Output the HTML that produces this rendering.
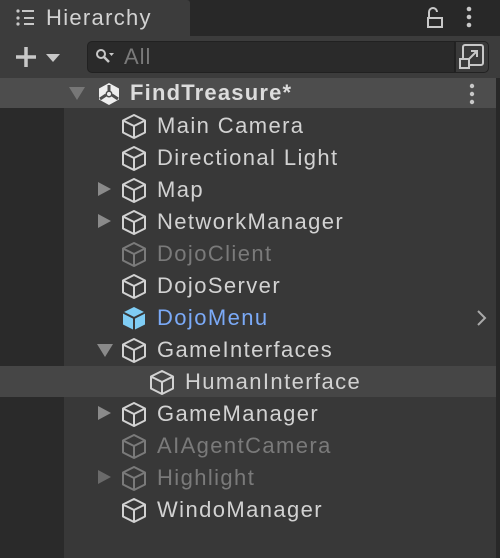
<!DOCTYPE html><html><head><style>
body{margin:0;width:500px;height:558px;background:#383838;position:relative;overflow:hidden;font-family:"Liberation Sans",sans-serif;color:#d2d2d2}
.a{position:absolute}
.row{position:absolute;left:0;width:496px;height:32px}
.t{position:absolute;top:4px;font-size:22px;line-height:26px;letter-spacing:1.4px;white-space:nowrap}
.ic{position:absolute;top:4px}
.arr{position:absolute;top:9px;width:0;height:0;border-top:7px solid transparent;border-bottom:7px solid transparent;border-left:13px solid #8a8a8a}
.dn{position:absolute;top:11px;width:0;height:0;border-left:8px solid transparent;border-right:8px solid transparent;border-top:13px solid #8a8a8a}
</style></head><body>
<div class="a" style="left:0;top:0;width:500px;height:36px;background:#282828"></div>
<div class="a" style="left:0;top:0;width:190px;height:36px;background:#3c3c3c;border-radius:0 3px 0 0"></div>
<svg class="a" style="left:15px;top:8px" width="22" height="20"><g fill="#c8c8c8"><circle cx="3" cy="3" r="1.6"/><circle cx="3" cy="10" r="1.6"/><circle cx="3" cy="16" r="1.6"/><rect x="7" y="2" width="12" height="2"/><rect x="9" y="9" width="10" height="2"/><rect x="9" y="15" width="10" height="2"/></g></svg>
<div class="a" style="left:46px;top:5px;font-size:22px;letter-spacing:1.3px;color:#d2d2d2">Hierarchy</div>
<svg class="a" style="left:426px;top:6px" width="20" height="22"><path d="M3 11V6a4 4 0 0 1 8 0" fill="none" stroke="#c8c8c8" stroke-width="2"/><rect x="2" y="12" width="14" height="9" fill="none" stroke="#c8c8c8" stroke-width="2"/></svg>
<svg class="a" style="left:464px;top:6px" width="10" height="24"><g fill="#c8c8c8"><circle cx="5" cy="3" r="2.3"/><circle cx="5" cy="11" r="2.3"/><circle cx="5" cy="19" r="2.3"/></g></svg>
<div class="a" style="left:0;top:36px;width:500px;height:42px;background:#3c3c3c"></div>
<svg class="a" style="left:13px;top:45px" width="50" height="24"><path d="M13 2v20M3 12h20" stroke="#c8c8c8" stroke-width="3.5"/><path d="M33 9h14l-7 8z" fill="#c8c8c8"/></svg>
<div class="a" style="left:87px;top:41px;width:366px;height:30px;background:#2a2a2a;border:1px solid #212121;border-radius:5px 0 0 5px"></div>
<svg class="a" style="left:95px;top:48px" width="22" height="16"><circle cx="6" cy="6" r="4" fill="none" stroke="#c8c8c8" stroke-width="2"/><path d="M9 9l5 5" stroke="#c8c8c8" stroke-width="2.5"/><path d="M14 5h5l-2.5 3z" fill="#c8c8c8"/></svg>
<div class="a" style="left:124px;top:44px;font-size:22px;letter-spacing:1px;color:#7a7a7a">All</div>
<div class="a" style="left:455px;top:41px;width:32px;height:30px;background:#3a3a3a;border:1px solid #222;border-radius:0 5px 5px 0"></div>
<svg class="a" style="left:459px;top:44px" width="26" height="26"><rect x="4" y="1" width="20" height="20" rx="2" fill="none" stroke="#c8c8c8" stroke-width="2"/><rect x="1" y="15" width="9" height="9" fill="#3a3a3a" stroke="#c8c8c8" stroke-width="2"/><path d="M9 16l9-9M12 7h6v6" fill="none" stroke="#c8c8c8" stroke-width="2"/></svg>
<div class="a" style="left:0;top:78px;width:496px;height:30px;background:#4d4d4d"></div>
<div class="a" style="left:0;top:108px;width:64px;height:450px;background:#2a2a2a"></div>
<div class="a" style="left:496px;top:78px;width:4px;height:480px;background:#282828"></div>
<div class="a" style="left:0;top:366px;width:496px;height:31px;background:#464646"></div>
<div class="dn" style="left:69px;top:87px;border-top-color:#777"></div>
<svg class="a" style="left:96px;top:81px" width="26" height="26"><path d="M13 2L23 7.5V18.5L13 24L3 18.5V7.5Z" fill="#eee"/><path d="M13 4v7M4 18l6-4M22 18l-6-4" stroke="#4d4d4d" stroke-width="3"/><circle cx="13" cy="13" r="3.5" fill="#4d4d4d"/><circle cx="13" cy="13" r="2" fill="#eee"/></svg>
<div class="a" style="left:130px;top:80px;font-size:22px;letter-spacing:1.2px;font-weight:bold;color:#dcdcdc">FindTreasure*</div>
<svg class="a" style="left:467px;top:83px" width="10" height="24"><g fill="#c8c8c8"><circle cx="5" cy="3" r="2.2"/><circle cx="5" cy="11" r="2.2"/><circle cx="5" cy="19" r="2.2"/></g></svg>
<svg width="0" height="0" style="position:absolute"><defs><g id="cube"><path d="M13 2L24 7.5V19.5L13 25L2 19.5V7.5Z M2 7.5L13 13L24 7.5 M13 13V25" fill="none" stroke="currentColor" stroke-width="2" stroke-linejoin="round"/></g></defs></svg>

<div class="row" style="top:109px"><svg class="ic" style="left:121px;color:#d2d2d2" width="26" height="27"><use href="#cube"/></svg><div class="t" style="left:157px">Main Camera</div></div>
<div class="row" style="top:141px"><svg class="ic" style="left:121px;color:#d2d2d2" width="26" height="27"><use href="#cube"/></svg><div class="t" style="left:157px">Directional Light</div></div>
<div class="row" style="top:173px"><div class="arr" style="left:98px"></div><svg class="ic" style="left:121px;color:#d2d2d2" width="26" height="27"><use href="#cube"/></svg><div class="t" style="left:157px">Map</div></div>
<div class="row" style="top:205px"><div class="arr" style="left:98px"></div><svg class="ic" style="left:121px;color:#d2d2d2" width="26" height="27"><use href="#cube"/></svg><div class="t" style="left:157px">NetworkManager</div></div>
<div class="row" style="top:237px"><svg class="ic" style="left:121px;color:#7a7a7a" width="26" height="27"><use href="#cube"/></svg><div class="t" style="left:157px;color:#7a7a7a">DojoClient</div></div>
<div class="row" style="top:269px"><svg class="ic" style="left:121px;color:#d2d2d2" width="26" height="27"><use href="#cube"/></svg><div class="t" style="left:157px">DojoServer</div></div>
<div class="row" style="top:301px"><svg class="ic" style="left:121px" width="26" height="27"><path d="M13 2L24 7.5V19.5L13 25L2 19.5V7.5Z" fill="#7fcdf5"/><path d="M2 7.5L13 13L24 7.5M13 13V25" fill="none" stroke="#383838" stroke-width="2"/></svg><div class="t" style="left:157px;color:#7baaf7">DojoMenu</div><svg class="a" style="left:476px;top:9px" width="12" height="16"><path d="M2 1l7 7-7 7" fill="none" stroke="#aaa" stroke-width="2"/></svg></div>
<div class="row" style="top:333px"><div class="dn" style="left:97px"></div><svg class="ic" style="left:121px;color:#d2d2d2" width="26" height="27"><use href="#cube"/></svg><div class="t" style="left:157px">GameInterfaces</div></div>
<div class="row" style="top:365px"><svg class="ic" style="left:149px;color:#d2d2d2" width="26" height="27"><use href="#cube"/></svg><div class="t" style="left:185px">HumanInterface</div></div>
<div class="row" style="top:397px"><div class="arr" style="left:98px"></div><svg class="ic" style="left:121px;color:#d2d2d2" width="26" height="27"><use href="#cube"/></svg><div class="t" style="left:157px">GameManager</div></div>
<div class="row" style="top:429px"><svg class="ic" style="left:121px;color:#7a7a7a" width="26" height="27"><use href="#cube"/></svg><div class="t" style="left:157px;color:#7a7a7a">AIAgentCamera</div></div>
<div class="row" style="top:461px"><div class="arr" style="left:98px;border-left-color:#6a6a6a"></div><svg class="ic" style="left:121px;color:#7a7a7a" width="26" height="27"><use href="#cube"/></svg><div class="t" style="left:157px;color:#7a7a7a">Highlight</div></div>
<div class="row" style="top:493px"><svg class="ic" style="left:121px;color:#d2d2d2" width="26" height="27"><use href="#cube"/></svg><div class="t" style="left:157px">WindoManager</div></div>
</body></html>
